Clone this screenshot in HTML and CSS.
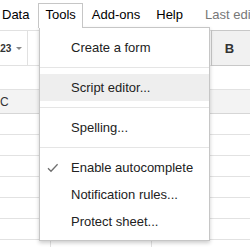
FILE: index.html
```html
<!DOCTYPE html>
<html>
<head>
<meta charset="utf-8">
<link rel="stylesheet" href="styles.css">
</head>
<body>
<div class="app">
  <div class="menubar">
    <span class="mitem">Data</span>
    <span class="mitem open">Tools</span>
    <span class="mitem">Add-ons</span>
    <span class="mitem">Help</span>
    <span class="lastedit">Last edit was seconds ago</span>
  </div>
  <div class="toolbar">
    <div class="tb-num"><span class="num">123</span><span class="caret"></span></div>
    <div class="tb-sep"></div>
    <div class="tb-fill"></div>
    <div class="tb-btn">B</div>
  </div>
  <div class="formula"></div>
  <div class="colhead">
    <div class="cell first"><span class="collabel">C</span></div>
    <div class="cell"></div>
    <div class="cell"></div>
  </div>
  <div class="rows">
    <div class="row"><div class="cell first"></div><div class="cell"></div><div class="cell"></div></div>
    <div class="row"><div class="cell first"></div><div class="cell"></div><div class="cell"></div></div>
    <div class="row"><div class="cell first"></div><div class="cell"></div><div class="cell"></div></div>
    <div class="row"><div class="cell first"></div><div class="cell"></div><div class="cell"></div></div>
    <div class="row"><div class="cell first"></div><div class="cell"></div><div class="cell"></div></div>
    <div class="row"><div class="cell first"></div><div class="cell"></div><div class="cell"></div></div>
    <div class="row"><div class="cell first"></div><div class="cell"></div><div class="cell"></div></div>
  </div>

  <div class="menu">
    <div class="item">Create a form</div>
    <div class="sep"></div>
    <div class="item hover">Script editor...</div>
    <div class="sep"></div>
    <div class="item">Spelling...</div>
    <div class="sep"></div>
    <div class="item checked">
      <svg class="check" width="12" height="10" viewBox="0 0 12 10"><path d="M1 5.2 L4 8.2 L10.6 1.2" fill="none" stroke="#6f6f6f" stroke-width="1.3"/></svg>
      Enable autocomplete
    </div>
    <div class="item">Notification rules...</div>
    <div class="item">Protect sheet...</div>
  </div>
</div>
</body>
</html>
```

FILE: styles.css
```css
html, body {
  margin: 0;
  padding: 0;
  background: #fff;
}
body {
  width: 250px;
  height: 247px;
  overflow: hidden;
  font-family: "Liberation Sans", Arial, sans-serif;
  font-size: 13px;
  color: #222;
}
.app {
  position: relative;
  width: 250px;
  height: 247px;
  overflow: hidden;
}
.menubar {
  display: flex;
  align-items: flex-start;
  gap: 2px;
  height: 30px;
  padding-top: 3px;
  box-sizing: border-box;
  margin-left: -5px;
  white-space: nowrap;
}
.mitem {
  display: block;
  padding: 0 6px 3px;
  line-height: 21px;
  border: 1px solid transparent;
  border-bottom: 0;
  color: #000;
}
.mitem.open {
  position: relative;
  z-index: 3;
  background: #fff;
  border-color: #c6c6c6;
}
.lastedit {
  line-height: 21px;
  padding-top: 1px;
  margin-left: 13px;
  color: #777;
}
.toolbar {
  display: flex;
  height: 36px;
  border-top: 1px solid #e1e1e1;
  border-bottom: 1px solid #e1e1e1;
  box-sizing: border-box;
}
.tb-num {
  width: 32px;
  display: flex;
  align-items: center;
  margin-left: -5px;
  padding-left: 0;
  box-sizing: border-box;
}
.num {
  font-size: 10px;
  font-weight: bold;
  color: #333;
  letter-spacing: -0.2px;
}
.caret {
  margin-left: 5px;
  width: 0;
  height: 0;
  border-left: 3px solid transparent;
  border-right: 3px solid transparent;
  border-top: 3px solid #888;
}
.tb-sep {
  width: 1px;
  background: #e1e1e1;
}
.tb-fill {
  flex: 1;
}
.tb-btn {
  width: 39px;
  margin-top: -1px;
  margin-bottom: -1px;
  border: 1px solid #c8c8c8;
  border-right: 0;
  background: #f1f1f1;
  box-sizing: border-box;
  display: flex;
  align-items: center;
  justify-content: center;
  font-weight: bold;
  font-size: 13px;
  color: #333;
  padding-right: 3px;
}
.formula {
  height: 24px;
  border-bottom: 1px solid #e2e2e2;
  box-sizing: border-box;
}
.colhead, .row {
  display: flex;
  box-sizing: border-box;
}
.colhead {
  height: 24px;
  background: #f3f3f3;
  border-bottom: 1px solid #d6d6d6;
}
.row {
  height: 21px;
  border-bottom: 1px solid #e2e2e2;
}
.cell {
  width: 101px;
  flex: none;
  border-right: 1px solid #e2e2e2;
  box-sizing: border-box;
}
.cell.first {
  width: 51px;
  position: relative;
}
.colhead .cell {
  border-right-color: #d6d6d6;
}
.collabel {
  display: block;
  line-height: 23px;
  padding-top: 1px;
  font-size: 12px;
  color: #333;
}
.menu {
  position: absolute;
  left: 39px;
  top: 27px;
  width: 171px;
  box-sizing: border-box;
  background: #fff;
  border: 1px solid #c6c6c6;
  box-shadow: 0 2px 4px rgba(0, 0, 0, 0.2);
  padding: 6px 0 5px;
  z-index: 2;
}
.item {
  position: relative;
  padding: 6px 0 6px 31px;
  line-height: 15px;
  color: #222;
  white-space: nowrap;
}
.item.hover {
  background: #eee;
}
.check {
  position: absolute;
  left: 7px;
  top: 9px;
}
.sep {
  height: 1px;
  background: #e5e5e5;
  margin: 6px 0;
}
```
